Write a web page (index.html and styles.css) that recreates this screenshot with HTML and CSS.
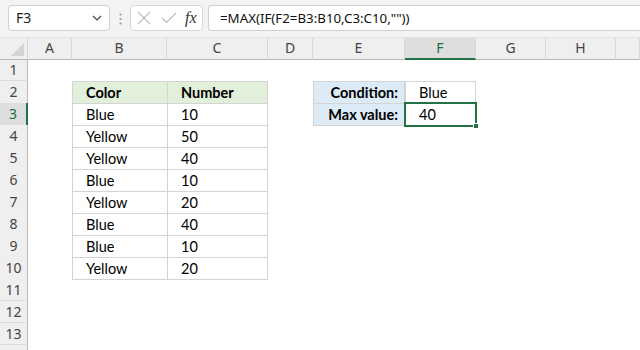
FILE: index.html
```html
<!DOCTYPE html>
<html>
<head>
<meta charset="utf-8">
<link rel="stylesheet" href="styles.css">
</head>
<body>
<div class="app">
  <div class="toolbar">
    <div class="namebox">
      <span class="name">F3</span>
      <svg class="chev" width="10" height="6" viewBox="0 0 10 6"><path d="M1 1 L5 5 L9 1" fill="none" stroke="#444" stroke-width="1.2"/></svg>
    </div>
    <svg class="dots" width="3" height="12" viewBox="0 0 3 12"><circle cx="1.5" cy="1.5" r="1.1" fill="#999"/><circle cx="1.5" cy="6" r="1.1" fill="#999"/><circle cx="1.5" cy="10.5" r="1.1" fill="#999"/></svg>
    <div class="fnbtns">
      <svg width="14" height="14" viewBox="0 0 14 14"><path d="M1 1 L13 13 M13 1 L1 13" stroke="#bdbdbd" stroke-width="1.2" fill="none"/></svg>
      <svg width="16" height="12" viewBox="0 0 16 12"><path d="M1 6 L5.5 10.5 L15 1" stroke="#bdbdbd" stroke-width="1.2" fill="none"/></svg>
      <span class="fx">fx</span>
    </div>
    <div class="formula">=MAX(IF(F2=B3:B10,C3:C10,""))</div>
  </div>

  <div class="sheet">
    <div class="row hdr">
      <div class="corner"><span class="tri"></span></div>
      <div class="ch">A</div><div class="ch">B</div><div class="ch">C</div><div class="ch">D</div>
      <div class="ch">E</div><div class="ch sel">F</div><div class="ch">G</div><div class="ch">H</div><div class="ch"></div>
    </div>

    <div class="row">
      <div class="rh">1</div><div></div><div></div><div></div><div></div><div></div><div></div><div></div><div></div><div></div>
    </div>
    <div class="row">
      <div class="rh">2</div><div></div>
      <div class="c t g b">Color</div><div class="c t g b r">Number</div>
      <div></div>
      <div class="c t l b lab r">Condition:</div><div class="c t r">Blue</div>
      <div></div><div></div><div></div>
    </div>
    <div class="row">
      <div class="rh selr">3</div><div></div>
      <div class="c t">Blue</div><div class="c t r">10</div>
      <div></div>
      <div class="c t l b lab r bt">Max value:</div><div class="c t r bt active">40<span class="selbox"><span class="handle"></span></span></div>
      <div></div><div></div><div></div>
    </div>
    <div class="row">
      <div class="rh">4</div><div></div>
      <div class="c t">Yellow</div><div class="c t r">50</div>
      <div></div><div></div><div></div><div></div><div></div><div></div>
    </div>
    <div class="row">
      <div class="rh">5</div><div></div>
      <div class="c t">Yellow</div><div class="c t r">40</div>
      <div></div><div></div><div></div><div></div><div></div><div></div>
    </div>
    <div class="row">
      <div class="rh">6</div><div></div>
      <div class="c t">Blue</div><div class="c t r">10</div>
      <div></div><div></div><div></div><div></div><div></div><div></div>
    </div>
    <div class="row">
      <div class="rh">7</div><div></div>
      <div class="c t">Yellow</div><div class="c t r">20</div>
      <div></div><div></div><div></div><div></div><div></div><div></div>
    </div>
    <div class="row">
      <div class="rh">8</div><div></div>
      <div class="c t">Blue</div><div class="c t r">40</div>
      <div></div><div></div><div></div><div></div><div></div><div></div>
    </div>
    <div class="row">
      <div class="rh">9</div><div></div>
      <div class="c t">Blue</div><div class="c t r">10</div>
      <div></div><div></div><div></div><div></div><div></div><div></div>
    </div>
    <div class="row">
      <div class="rh">10</div><div></div>
      <div class="c t bt">Yellow</div><div class="c t r bt">20</div>
      <div></div><div></div><div></div><div></div><div></div><div></div>
    </div>
    <div class="row">
      <div class="rh">11</div><div></div><div></div><div></div><div></div><div></div><div></div><div></div><div></div><div></div>
    </div>
    <div class="row">
      <div class="rh">12</div><div></div><div></div><div></div><div></div><div></div><div></div><div></div><div></div><div></div>
    </div>
    <div class="row">
      <div class="rh">13</div><div></div><div></div><div></div><div></div><div></div><div></div><div></div><div></div><div></div>
    </div>
    <div class="row">
      <div class="rh"></div><div></div><div></div><div></div><div></div><div></div><div></div><div></div><div></div><div></div>
    </div>
  </div>
</div>
</body>
</html>
```

FILE: styles.css
```css
* { box-sizing: border-box; }
html, body { margin: 0; padding: 0; background: #fff; }
body { width: 640px; height: 350px; overflow: hidden; }

.app { width: 640px; height: 350px; overflow: hidden; font-family: "Noto Sans", "Open Sans", sans-serif; }

.toolbar {
  height: 37px;
  background: #f3f3f3;
  display: flex;
  align-items: flex-start;
  padding: 5px 0 0 8px;
}
.namebox {
  width: 102px;
  height: 26px;
  background: #fff;
  border: 1px solid #d0d0d0;
  border-radius: 4px;
  display: flex;
  align-items: center;
  justify-content: space-between;
  padding: 0 7px 0 7px;
  font-size: 14px;
  color: #222;
}
.namebox .name { line-height: 1; }
.dots { margin: 8px 8px 0 9px; }
.fnbtns {
  width: 73px;
  height: 26px;
  background: #fff;
  border: 1px solid #d8d8d8;
  border-radius: 4px;
  display: flex;
  align-items: center;
  gap: 10px;
  padding: 0 0 0 6px;
}
.fx {
  font-family: "Liberation Serif", "DejaVu Serif", serif;
  font-style: italic;
  font-size: 16px;
  color: #333;
  margin-left: -2px;
}
.formula {
  flex: 1;
  margin-left: 5px;
  height: 26px;
  background: #fff;
  border: 1px solid #d0d0d0;
  border-right: none;
  border-radius: 4px 0 0 4px;
  padding: 0 0 0 11px;
  font-size: 13.3px;
  line-height: 24px;
  color: #111;
  white-space: nowrap;
}

.sheet { display: flex; flex-direction: column; }
.row {
  display: grid;
  grid-template-columns: 28px 44px 95px 101px 45px 92px 71px 70px 70px 1fr;
  height: 22px;
}
.row.hdr { background: #efefef; border-top: 1px solid #e3e3e3; }

.corner { border-right: 1px solid #d6d6d6; border-bottom: 1px solid #b8b8b8; position: relative; }
.tri {
  position: absolute; right: 3px; bottom: 3px;
  width: 0; height: 0;
  border-left: 13px solid transparent;
  border-bottom: 13px solid #d4d4d4;
}
.ch {
  border-right: 1px solid #d8d8d8;
  border-bottom: 1px solid #b8b8b8;
  text-align: center;
  font-size: 14px;
  line-height: 20px;
  color: #444;
}
.ch.sel { background: #dedede; border-bottom: 2px solid #217346; color: #1e6b41; }

.rh {
  background: #efefef;
  border-right: 1px solid #b8b8b8;
  border-bottom: 1px solid #dcdcdc;
  text-align: center;
  font-size: 14px;
  line-height: 21px;
  color: #444;
}
.rh.selr { background: #dedede; border-right: 2px solid #217346; color: #1e6b41; }

.c {
  font-family: Lato, "Liberation Sans", sans-serif;
  font-size: 14.5px;
  line-height: 22px;
  color: #000;
  padding-left: 13px;
  white-space: nowrap;
}
.t { border-top: 1px solid #d4d4d4; border-left: 1px solid #d4d4d4; }
.r { border-right: 1px solid #d4d4d4; }
.bt { border-bottom: 1px solid #d4d4d4; line-height: 21px; }
.g { background: #e2efda; }
.l { background: #ddebf7; }
.b { font-weight: 700; }
.lab { text-align: right; padding-left: 0; padding-right: 6px; }

.active { position: relative; }
.selbox {
  position: absolute;
  left: -2px; top: -2px; right: -2px; bottom: -2px;
  border: 2px solid #217346;
}
.handle {
  position: absolute;
  right: -4px; bottom: -4px;
  width: 6px; height: 6px;
  background: #217346;
  border: 1px solid #fff;
}
```
